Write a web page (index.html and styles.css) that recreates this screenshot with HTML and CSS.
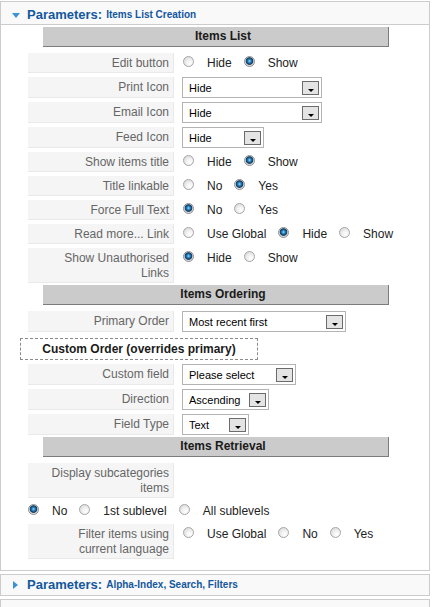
FILE: index.html
```html
<!DOCTYPE html>
<html lang="en">
<head>
<meta charset="utf-8">
<title>Parameters</title>
<link rel="stylesheet" href="styles.css">
</head>
<body>
<div class="panel">
  <div class="ph ph-first"><span class="tri-down"></span><span class="pt">Parameters:</span><span class="ps">Items List Creation</span></div>
  <div class="pbody">
    <div class="bar">Items List</div>

    <div class="row">
      <div class="key">Edit button</div>
      <div class="val"><div class="opts">
        <input type="radio" class="rd" name="r1"><label>Hide</label>
        <input type="radio" class="rd" name="r1" checked><label>Show</label>
      </div></div>
    </div>

    <div class="row">
      <div class="key">Print Icon</div>
      <div class="val"><div class="sel w140"><span class="txt">Hide</span><span class="arr"><span class="tri"></span></span></div></div>
    </div>

    <div class="row">
      <div class="key">Email Icon</div>
      <div class="val"><div class="sel w140"><span class="txt">Hide</span><span class="arr"><span class="tri"></span></span></div></div>
    </div>

    <div class="row">
      <div class="key">Feed Icon</div>
      <div class="val"><div class="sel w82"><span class="txt">Hide</span><span class="arr"><span class="tri"></span></span></div></div>
    </div>

    <div class="row">
      <div class="key">Show items title</div>
      <div class="val"><div class="opts">
        <input type="radio" class="rd" name="r2"><label>Hide</label>
        <input type="radio" class="rd" name="r2" checked><label>Show</label>
      </div></div>
    </div>

    <div class="row">
      <div class="key">Title linkable</div>
      <div class="val"><div class="opts">
        <input type="radio" class="rd" name="r3"><label>No</label>
        <input type="radio" class="rd" name="r3" checked><label>Yes</label>
      </div></div>
    </div>

    <div class="row">
      <div class="key">Force Full Text</div>
      <div class="val"><div class="opts">
        <input type="radio" class="rd" name="r4" checked><label>No</label>
        <input type="radio" class="rd" name="r4"><label>Yes</label>
      </div></div>
    </div>

    <div class="row">
      <div class="key">Read more... Link</div>
      <div class="val"><div class="opts">
        <input type="radio" class="rd" name="r5"><label>Use Global</label>
        <input type="radio" class="rd" name="r5" checked><label>Hide</label>
        <input type="radio" class="rd" name="r5"><label>Show</label>
      </div></div>
    </div>

    <div class="row">
      <div class="key">Show Unauthorised Links</div>
      <div class="val"><div class="opts">
        <input type="radio" class="rd" name="r6" checked><label>Hide</label>
        <input type="radio" class="rd" name="r6"><label>Show</label>
      </div></div>
    </div>

    <div class="bar">Items Ordering</div>

    <div class="row">
      <div class="key">Primary Order</div>
      <div class="val"><div class="sel w164"><span class="txt">Most recent first</span><span class="arr"><span class="tri"></span></span></div></div>
    </div>

    <div class="custom">Custom Order (overrides primary)</div>

    <div class="row">
      <div class="key">Custom field</div>
      <div class="val"><div class="sel w114"><span class="txt">Please select</span><span class="arr"><span class="tri"></span></span></div></div>
    </div>

    <div class="row">
      <div class="key">Direction</div>
      <div class="val"><div class="sel w87"><span class="txt">Ascending</span><span class="arr"><span class="tri"></span></span></div></div>
    </div>

    <div class="row">
      <div class="key">Field Type</div>
      <div class="val"><div class="sel w67"><span class="txt">Text</span><span class="arr"><span class="tri"></span></span></div></div>
    </div>

    <div class="bar">Items Retrieval</div>

    <div class="row">
      <div class="key">Display subcategories items</div>
      <div class="val"></div>
    </div>

    <div class="free">
      <input type="radio" class="rd" name="r7" checked><label>No</label>
      <input type="radio" class="rd" name="r7"><label>1st sublevel</label>
      <input type="radio" class="rd" name="r7"><label>All sublevels</label>
    </div>

    <div class="row">
      <div class="key">Filter items using current language</div>
      <div class="val"><div class="opts">
        <input type="radio" class="rd" name="r8"><label>Use Global</label>
        <input type="radio" class="rd" name="r8"><label>No</label>
        <input type="radio" class="rd" name="r8"><label>Yes</label>
      </div></div>
    </div>
  </div>
</div>

<div class="panel">
  <div class="ph"><span class="tri-right"></span><span class="pt">Parameters:</span><span class="ps">Alpha-Index, Search, Filters</span></div>
</div>

<div class="panel">
  <div class="ph"></div>
</div>
</body>
</html>
```

FILE: styles.css
```css
* {
  box-sizing: border-box;
}

html,
body {
  margin: 0;
  padding: 0;
  background: #ffffff;
}

body {
  width: 438px;
  padding-top: 1px;
  font-family: "Liberation Sans", Arial, Helvetica, sans-serif;
  font-size: 12px;
  color: #222222;
}

.panel {
  width: 430px;
  border: 1px solid #cccccc;
  background: #ffffff;
  margin-bottom: 3px;
}

.ph {
  display: flex;
  align-items: flex-start;
  height: 20px;
  line-height: 20px;
  padding-left: 11px;
  background: #f9f9f9;
  white-space: nowrap;
}

.ph-first {
  height: 23px;
  padding-top: 3px;
  line-height: 19px;
  border-bottom: 1px solid #cccccc;
}

.tri-down {
  width: 0;
  height: 0;
  margin-top: 8px;
  margin-right: 7px;
  border-left: 4px solid transparent;
  border-right: 4px solid transparent;
  border-top: 5px solid #3a94d4;
}

.tri-right {
  width: 0;
  height: 0;
  margin-top: 6px;
  margin-left: 1px;
  margin-right: 9px;
  border-top: 4px solid transparent;
  border-bottom: 4px solid transparent;
  border-left: 5px solid #3a94d4;
}

.pt {
  font-size: 13px;
  font-weight: bold;
  color: #13579e;
}

.ps {
  margin-left: 4px;
  font-size: 10px;
  font-weight: bold;
  color: #13579e;
}

.pbody {
  display: flex;
  flex-direction: column;
  padding-top: 0;
  padding-bottom: 11px;
}

.bar {
  margin: 2px 0 2px 42px;
  width: 346px;
  height: 20px;
  padding-left: 15px;
  line-height: 19px;
  text-align: center;
  font-weight: bold;
  color: #1a1a1a;
  background: #cbcbcb;
  border-right: 1px solid #7c7c7c;
  border-bottom: 1px solid #7c7c7c;
}

.row {
  display: flex;
  align-items: stretch;
  margin-top: 4px;
}

.key {
  flex: none;
  width: 146px;
  margin-left: 27px;
  padding: 3px 4px 1px 16px;
  line-height: 15px;
  text-align: right;
  color: #666666;
  background: #f5f5f5;
  border-right: 1px solid #e9e9e9;
  border-bottom: 1px solid #e9e9e9;
}

.val {
  display: flex;
  align-items: flex-start;
  padding-left: 8px;
}

.opts {
  display: flex;
  align-items: flex-start;
  padding-top: 3px;
  padding-left: 1px;
  line-height: 15px;
  color: #222222;
  white-space: nowrap;
}

.free {
  display: flex;
  align-items: flex-start;
  margin-top: 4px;
  margin-left: 27px;
  height: 18px;
  padding-top: 2px;
  line-height: 15px;
  color: #222222;
  white-space: nowrap;
}

.rd {
  -webkit-appearance: none;
  appearance: none;
  flex: none;
  width: 11px;
  height: 11px;
  margin: 0 13px 0 0;
  border-radius: 50%;
  border: 1px solid #a6a6a6;
  background: radial-gradient(circle at 65% 70%, #ffffff 0%, #f3f3f3 35%, #d2d2d2 100%);
}

.rd:checked {
  border-color: #8e8e8e;
  background: radial-gradient(circle at 50% 45%, #a6dcf8 0, #3b92cd 1.3px, #1b5e92 2.4px, #0f3f66 3.4px, #d8d8d8 4.2px, #f0f0f0 100%);
}

.opts label,
.free label {
  margin-right: 12px;
}

.sel {
  display: flex;
  align-items: center;
  height: 21px;
  padding: 0 2px 0 6px;
  border: 1px solid #b3b3b3;
  background: #ffffff;
  font-size: 11px;
  color: #000000;
  white-space: nowrap;
}

.sel .txt {
  flex: 1;
  padding-top: 1px;
}

.arr {
  flex: none;
  display: flex;
  justify-content: center;
  align-items: flex-end;
  width: 17px;
  height: 14px;
  border: 1px solid #6b6b6b;
  background: #e4e4e4;
}

.tri {
  width: 0;
  height: 0;
  margin-bottom: 2px;
  border-left: 3px solid transparent;
  border-right: 3px solid transparent;
  border-top: 3px solid #000000;
}

.w140 { width: 140px; }
.w82 { width: 82px; }
.w164 { width: 164px; }
.w114 { width: 114px; }
.w87 { width: 87px; }
.w67 { width: 67px; }

.custom {
  margin-top: 6px;
  margin-left: 19px;
  width: 238px;
  height: 22px;
  line-height: 20px;
  text-align: center;
  font-weight: bold;
  color: #1a1a1a;
  border: 1px dashed #8a8a8a;
}
```
